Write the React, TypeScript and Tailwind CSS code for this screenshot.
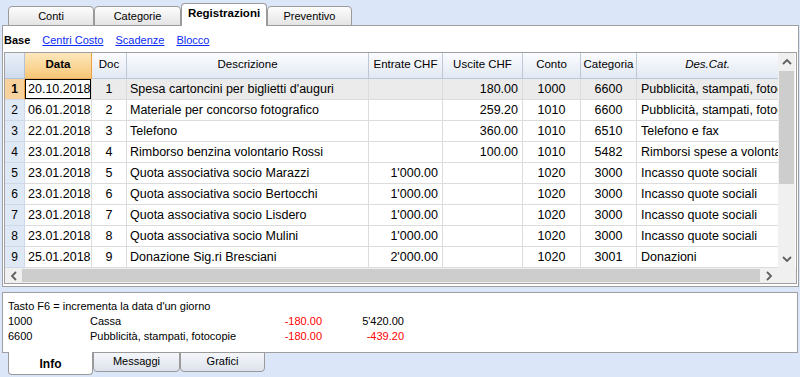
import React from "react";

type Row = {
  n: number;
  date: string;
  doc: string;
  desc: string;
  inc: string;
  out: string;
  conto: string;
  cat: string;
  desCat: string;
};

const rows: Row[] = [
  { n: 1, date: "20.10.2018", doc: "1", desc: "Spesa cartoncini per biglietti d'auguri", inc: "", out: "180.00", conto: "1000", cat: "6600", desCat: "Pubblicità, stampati, fotocopie" },
  { n: 2, date: "06.01.2018", doc: "2", desc: "Materiale per concorso fotografico", inc: "", out: "259.20", conto: "1010", cat: "6600", desCat: "Pubblicità, stampati, fotocopie" },
  { n: 3, date: "22.01.2018", doc: "3", desc: "Telefono", inc: "", out: "360.00", conto: "1010", cat: "6510", desCat: "Telefono e fax" },
  { n: 4, date: "23.01.2018", doc: "4", desc: "Rimborso benzina volontario Rossi", inc: "", out: "100.00", conto: "1010", cat: "5482", desCat: "Rimborsi spese a volontari" },
  { n: 5, date: "23.01.2018", doc: "5", desc: "Quota associativa socio Marazzi", inc: "1'000.00", out: "", conto: "1020", cat: "3000", desCat: "Incasso quote sociali" },
  { n: 6, date: "23.01.2018", doc: "6", desc: "Quota associativa socio Bertocchi", inc: "1'000.00", out: "", conto: "1020", cat: "3000", desCat: "Incasso quote sociali" },
  { n: 7, date: "23.01.2018", doc: "7", desc: "Quota associativa socio Lisdero", inc: "1'000.00", out: "", conto: "1020", cat: "3000", desCat: "Incasso quote sociali" },
  { n: 8, date: "23.01.2018", doc: "8", desc: "Quota associativa socio Mulini", inc: "1'000.00", out: "", conto: "1020", cat: "3000", desCat: "Incasso quote sociali" },
  { n: 9, date: "25.01.2018", doc: "9", desc: "Donazione Sig.ri Bresciani", inc: "2'000.00", out: "", conto: "1020", cat: "3001", desCat: "Donazioni" },
];

// column widths include the right grid line
const cols = [
  { key: "date", label: "Data", w: "w-[67px]", align: "justify-start" },
  { key: "doc", label: "Doc", w: "w-[35px]", align: "justify-center" },
  { key: "desc", label: "Descrizione", w: "w-[242px]", align: "justify-start" },
  { key: "inc", label: "Entrate CHF", w: "w-[74px]", align: "justify-end" },
  { key: "out", label: "Uscite CHF", w: "w-[80px]", align: "justify-end" },
  { key: "conto", label: "Conto", w: "w-[58px]", align: "justify-center" },
  { key: "cat", label: "Categoria", w: "w-[56px]", align: "justify-center" },
  { key: "desCat", label: "Des.Cat.", w: "w-[141px]", align: "justify-start" },
] as const;

function Chevron({ dir }: { dir: "up" | "down" | "left" | "right" }) {
  const pts = {
    up: "1,6 5,2 9,6",
    down: "1,2 5,6 9,2",
    left: "6,1 2,5 6,9",
    right: "2,1 6,5 2,9",
  }[dir];
  const horiz = dir === "left" || dir === "right";
  return (
    <svg width={horiz ? 8 : 10} height={horiz ? 10 : 8} viewBox={horiz ? "0 0 8 10" : "0 0 10 8"} aria-hidden="true">
      <polyline points={pts} fill="none" stroke="#606060" strokeWidth="1.8" />
    </svg>
  );
}

function TopTab({ label, w, active = false }: { label: string; w: string; active?: boolean }) {
  return (
    <div
      className={`${w} flex items-center justify-center rounded-t-[4px] border border-[#9a9a9a] ${
        active
          ? "h-[23px] border-b-0 bg-white text-[11.5px] font-bold pb-[2px]"
          : "h-[20px] bg-linear-to-b from-[#fdfdfd] to-[#e4e4e4] text-[11px]"
      }`}
    >
      {label}
    </div>
  );
}

function BottomTab({ label, w, active = false }: { label: string; w: string; active?: boolean }) {
  return (
    <div
      className={`${w} flex items-center justify-center rounded-b-[4px] border border-[#9a9a9a] ${
        active
          ? "h-[23px] border-t-0 bg-white text-[12px] font-bold pt-[2px]"
          : "h-[20px] bg-linear-to-b from-[#f4f6fa] to-[#dde3ec] text-[11px] pb-[2px]"
      }`}
    >
      {label}
    </div>
  );
}

export default function App() {
  return (
    <div className="w-[800px] h-[377px] overflow-hidden bg-[#dbe6f8] font-['Liberation_Sans',Arial,sans-serif] text-black">
      {/* top tabs */}
      <div className="relative z-10 flex h-[26px] items-end pl-[8px]">
        <TopTab label="Conti" w="w-[86px]" />
        <TopTab label="Categorie" w="w-[87px]" />
        <TopTab label="Registrazioni" w="w-[86px]" active />
        <TopTab label="Preventivo" w="w-[85px]" />
      </div>

      {/* main panel */}
      <div className="-mt-px ml-[2px] h-[262px] w-[797px] border border-[#a0a0a0] bg-white">
        <div className="flex h-[26px] items-center gap-[12px] pl-[1px] pt-[2px] text-[11px]">
          <span className="font-bold">Base</span>
          <span className="text-[#0a2bf5] underline">Centri Costo</span>
          <span className="text-[#0a2bf5] underline">Scadenze</span>
          <span className="text-[#0a2bf5] underline">Blocco</span>
        </div>

        <div className="mx-[1px] flex h-[232px] flex-col border border-[#a0a0a0]">
          <div className="flex h-[215px]">
            {/* grid */}
            <div className="w-[773px] overflow-hidden">
              {/* header */}
              <div className="flex h-[26px] text-[11.5px]">
                <div className="w-[20px] border-r border-b border-[#b3c1d4] bg-linear-to-b from-[#eaf0f9] to-[#cfdcee]" />
                {cols.map((c) => (
                  <div
                    key={c.key}
                    className={`${c.w} flex items-center justify-center border-b pb-[2px] ${
                      c.key === "date"
                        ? "border-r border-r-[#f0a03c] border-b-[#e8b060] bg-linear-to-b from-[#fde8bc] to-[#f7c676] font-bold"
                        : "border-r border-[#bcc8d8] bg-linear-to-b from-[#fbfcfe] to-[#e2e9f3]"
                    } ${c.key === "desCat" ? "italic border-r-0" : ""}`}
                  >
                    {c.label}
                  </div>
                ))}
              </div>
              {/* rows */}
              {rows.map((r) => {
                const first = r.n === 1;
                return (
                  <div key={r.n} className="flex h-[21px] text-[12.5px]">
                    <div
                      className={`w-[20px] flex items-center justify-center border-r border-b border-[#cdd8e8] text-[12px] ${
                        first ? "bg-[#f8d29c] font-bold border-r-[#f0a03c]" : "bg-[#dfe8f5]"
                      }`}
                    >
                      {r.n}
                    </div>
                    {cols.map((c) => {
                      const sel = first && c.key === "date";
                      return (
                        <div
                          key={c.key}
                          className={`${c.w} flex items-center ${c.align} overflow-hidden whitespace-nowrap border-b border-[#dcdcdc] ${
                            c.key === "desCat" ? "pl-[4px]" : "border-r px-[3px]"
                          } ${c.align === "justify-end" ? "pr-[4px]" : ""} ${
                            sel ? "bg-white shadow-[inset_0_0_0_1px_#000]" : first ? "bg-[#ebebeb]" : "bg-white"
                          }`}
                        >
                          {r[c.key]}
                        </div>
                      );
                    })}
                  </div>
                );
              })}
            </div>

            {/* vertical scrollbar */}
            <div className="flex w-[17px] flex-col bg-[#f0f0f0]">
              <div className="flex h-[18px] items-center justify-center">
                <Chevron dir="up" />
              </div>
              <div className="mx-[1px] h-[113px] bg-[#cdcdcd]" />
              <div className="flex-1" />
              <div className="flex h-[18px] items-center justify-center">
                <Chevron dir="down" />
              </div>
            </div>
          </div>

          {/* horizontal scrollbar */}
          <div className="flex h-[15px] bg-[#f0f0f0]">
            <div className="flex w-[17px] items-center justify-center">
              <Chevron dir="left" />
            </div>
            <div className="my-[1px] w-[738px] bg-[#cdcdcd]" />
            <div className="flex w-[18px] items-center justify-center">
              <Chevron dir="right" />
            </div>
            <div className="w-[17px]" />
          </div>
        </div>
      </div>

      {/* info panel */}
      <div className="ml-[2px] mt-[5px] h-[61px] w-[796px] border border-[#a0a0a0] bg-white px-[5px] pt-[6px] text-[11px] leading-[15px]">
        <div>Tasto F6 = incrementa la data d'un giorno</div>
        <div className="flex">
          <span className="w-[82px]">1000</span>
          <span className="w-[170px]">Cassa</span>
          <span className="w-[62px] text-right text-[#ff0000]">-180.00</span>
          <span className="w-[82px] text-right">5'420.00</span>
        </div>
        <div className="flex">
          <span className="w-[82px]">6600</span>
          <span className="w-[170px]">Pubblicità, stampati, fotocopie</span>
          <span className="w-[62px] text-right text-[#ff0000]">-180.00</span>
          <span className="w-[82px] text-right text-[#ff0000]">-439.20</span>
        </div>
      </div>

      {/* bottom tabs */}
      <div className="relative z-10 -mt-px flex pl-[8px]">
        <BottomTab label="Info" w="w-[85px]" active />
        <BottomTab label="Messaggi" w="w-[87px]" />
        <BottomTab label="Grafici" w="w-[85px]" />
      </div>
    </div>
  );
}
